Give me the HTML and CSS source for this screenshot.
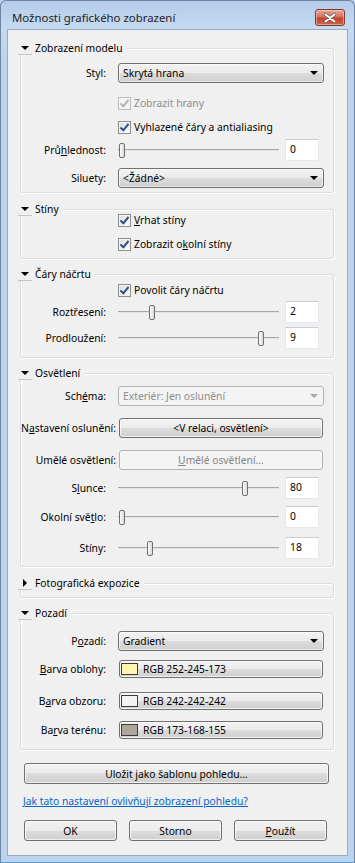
FILE: index.html
```html
<!DOCTYPE html>
<html lang="cs">
<head>
    <meta charset="UTF-8">
    <meta name="viewport" content="width=device-width, initial-scale=1.0">
    <title>Možnosti grafického zobrazení</title>
    <link rel="stylesheet" href="styles.css">
</head>
<body>

<div class="window">
    <div class="titlebar">
        <span class="title">Možnosti grafického zobrazení</span>
        <button class="close-btn" type="button">
            <svg width="12" height="10" viewBox="0 0 12 10"><path d="M1.5 1.5 L10.5 8.5 M10.5 1.5 L1.5 8.5" stroke="#5a5a5a" stroke-width="3.2" stroke-linecap="round"/><path d="M1.5 1.5 L10.5 8.5 M10.5 1.5 L1.5 8.5" stroke="#fff" stroke-width="2" stroke-linecap="round"/></svg>
        </button>
    </div>

    <div class="client">
        <!-- Zobrazení modelu -->
        <div class="group">
            <div class="group-head"><span class="twisty"></span>Zobrazení modelu</div>
            <div class="row sp14"><span class="label">Styl:</span><div class="combo">Skrytá hrana<span class="arrow"></span></div></div>
            <div class="row row-check sp12"><span class="check disabled"></span><span class="muted">Zobrazit hrany</span></div>
            <div class="row row-check sp8"><span class="check"></span>Vyhlazené čáry a antialiasing</div>
            <div class="row sp4"><span class="label">Prů<u>h</u>lednost:</span><div class="slider"><span class="thumb" style="margin-left: 1px"></span></div><div class="field">0</div></div>
            <div class="row sp7"><span class="label">Siluety:</span><div class="combo">&lt;Žádné&gt;<span class="arrow"></span></div></div>
            <div class="pad4"></div>
        </div>

        <!-- Stíny -->
        <div class="group group-loose">
            <div class="group-head"><span class="twisty"></span>Stíny</div>
            <div class="row row-check sp2"><span class="check"></span><span><u>V</u>rhat stíny</span></div>
            <div class="row row-check sp8"><span class="check"></span><span>Zobrazit o<u>k</u>olní stíny</span></div>
            <div class="pad6"></div>
        </div>

        <!-- Čáry náčrtu -->
        <div class="group">
            <div class="group-head"><span class="twisty"></span>Čáry náčrtu</div>
            <div class="row row-check sp7"><span class="check"></span>Povolit čáry náčrtu</div>
            <div class="row sp3"><span class="label">Roztřesení:</span><div class="slider"><span class="thumb" style="margin-left: 31px"></span></div><div class="field">2</div></div>
            <div class="row sp4"><span class="label">Prodloužení:</span><div class="slider"><span class="thumb" style="margin-left: 140px"></span></div><div class="field">9</div></div>
            <div class="pad8"></div>
        </div>

        <!-- Osvětlení -->
        <div class="group">
            <div class="group-head"><span class="twisty"></span>Osvětlení</div>
            <div class="row sp12"><span class="label">Sch<u>é</u>ma:</span><div class="combo disabled">Exteriér: Jen oslunění<span class="arrow"></span></div></div>
            <div class="row sp12"><span class="label label-wide">N<u>a</u>stavení oslunění:</span><button class="btn btn-wide" type="button">&lt;V relaci, osvětlení&gt;</button></div>
            <div class="row sp12"><span class="label label-wide">Umělé osvětlení:</span><button class="btn btn-wide" type="button" disabled><span><u>U</u>mělé osvětlení...</span></button></div>
            <div class="row sp7"><span class="label">S<u>l</u>unce:</span><div class="slider"><span class="thumb" style="margin-left: 124px"></span></div><div class="field">80</div></div>
            <div class="row sp7"><span class="label">Okolní svě<u>t</u>lo:</span><div class="slider"><span class="thumb" style="margin-left: 1px"></span></div><div class="field">0</div></div>
            <div class="row sp9"><span class="label">Stíny:</span><div class="slider"><span class="thumb" style="margin-left: 29px"></span></div><div class="field">18</div></div>
            <div class="pad7"></div>
        </div>

        <!-- Fotografická expozice (sbaleno) -->
        <div class="group group-loose group-collapsed">
            <div class="group-head"><span class="twisty closed"></span>Fotografická expozice</div>
        </div>

        <!-- Pozadí -->
        <div class="group">
            <div class="group-head"><span class="twisty"></span>Pozadí</div>
            <div class="row sp17"><span class="label">P<u>o</u>zadí:</span><div class="combo">Gradient<span class="arrow"></span></div></div>
            <div class="row sp9"><span class="label"><u>B</u>arva oblohy:</span><button class="btn btn-color" type="button"><span class="swatch" style="background: rgb(252, 245, 173)"></span>RGB 252-245-173</button></div>
            <div class="row sp14"><span class="label">B<u>a</u>rva obzoru:</span><button class="btn btn-color" type="button"><span class="swatch" style="background: rgb(242, 242, 242)"></span>RGB 242-242-242</button></div>
            <div class="row sp11"><span class="label">Ba<u>r</u>va terénu:</span><button class="btn btn-color" type="button"><span class="swatch" style="background: rgb(173, 168, 155)"></span>RGB 173-168-155</button></div>
            <div class="pad10"></div>
        </div>

        <button class="btn btn-save" type="button">Uložit jako šablonu pohledu...</button>
        <a class="help-link" href="#">Jak tato nastavení ovlivňují zobrazení pohledu?</a>

        <div class="actions">
            <button class="btn" type="button">OK</button>
            <button class="btn" type="button">Storno</button>
            <button class="btn" type="button"><span><u>P</u>oužít</span></button>
        </div>
    </div>
</div>

</body>
</html>
```

FILE: styles.css
```css
html, body {
    margin: 0;
}
body {
    background: #bcd3ee;
    font-family: "Noto Sans", "Open Sans", sans-serif;
    font-size: 10.3px;
    color: #000;
}
.window {
    width: 355px;
    height: 863px;
    box-sizing: border-box;
    border: 1px solid #6e86a3;
    border-bottom-color: #5a9ad9;
    border-radius: 6px 6px 0 0;
    background: linear-gradient(#b4cce9, #c6daf1 28px, #bcd3ee 60px);
    padding: 0 6px 6px;
    display: flex;
    flex-direction: column;
}
.titlebar {
    height: 28px;
    box-sizing: border-box;
    padding: 5px 3px 0 5px;
    display: flex;
    align-items: center;
    justify-content: space-between;
}
.title {
    font-size: 11.4px;
    color: #1e1e1e;
}
.close-btn {
    width: 30px;
    height: 17px;
    padding: 0;
    border: 1px solid #7a3a31;
    border-radius: 3px;
    background: linear-gradient(#e7a898, #d6715e 45%, #c2452e 55%, #d0634c);
    box-shadow: inset 0 0 0 1px rgba(255, 220, 210, 0.5);
    display: flex;
    align-items: center;
    justify-content: center;
}
.client {
    flex: 1;
    background: #f0f0f0;
    border: 1px solid #95abc6;
    display: flex;
    flex-direction: column;
}

/* skupiny */
.group {
    margin: 18px 13px 0 12px;
    border: 1px solid #d5dfe5;
    border-radius: 3px;
    box-shadow: inset 1px 1px #fff, 1px 1px #fff;
}
.group + .group {
    margin-top: 15px;
}
.group + .group-loose {
    margin-top: 16px;
}
.group-collapsed {
    padding-bottom: 13px;
}
.group-head {
    display: flex;
    align-items: center;
    width: fit-content;
    height: 14px;
    margin: -8px 0 -6px -3px;
    padding-right: 4px;
    background: #f0f0f0;
}
.twisty {
    width: 14px;
    height: 13px;
    border-bottom: 1px solid #c4c4c4;
    margin-right: 3px;
    display: flex;
    align-items: center;
    justify-content: center;
}
.twisty::before {
    content: "";
    border-left: 4px solid transparent;
    border-right: 4px solid transparent;
    border-top: 4px solid #000;
}
.twisty.closed::before {
    border-top: 4px solid transparent;
    border-bottom: 4px solid transparent;
    border-left: 4px solid #000;
    border-right: none;
}

/* řádky */
.row {
    display: flex;
    align-items: center;
    padding-right: 8px;
}
.row-check {
    height: 16px;
    padding-left: 97px;
}
.sp2 { margin-top: 2px; }
.sp3 { margin-top: 3px; }
.sp4 { margin-top: 4px; }
.sp7 { margin-top: 7px; }
.sp8 { margin-top: 8px; }
.sp9 { margin-top: 9px; }
.sp11 { margin-top: 11px; }
.sp12 { margin-top: 12px; }
.sp14 { margin-top: 14px; }
.sp17 { margin-top: 17px; }
.pad4 { height: 4px; }
.pad6 { height: 6px; }
.pad7 { height: 7px; }
.pad8 { height: 8px; }
.pad10 { height: 10px; }

.label {
    flex: 0 0 85px;
    min-width: 0;
    margin-right: 12px;
    text-align: right;
    white-space: nowrap;
}
.label-wide {
    flex-basis: 95px;
    margin-right: 2px;
}
.muted {
    color: #8d8d8d;
}

/* rozbalovací seznam */
.combo {
    width: 206px;
    height: 20px;
    box-sizing: border-box;
    border: 1px solid #707070;
    border-radius: 3px;
    background: linear-gradient(#f2f2f2, #ebebeb 50%, #dddddd 50%, #cfcfcf);
    box-shadow: inset 0 0 0 1px rgba(255, 255, 255, 0.6);
    padding: 0 5px 0 4px;
    display: flex;
    align-items: center;
    justify-content: space-between;
}
.arrow {
    border-left: 4px solid transparent;
    border-right: 4px solid transparent;
    border-top: 4px solid #000;
}
.combo.disabled {
    border-color: #adb2b5;
    background: #f4f4f4;
    box-shadow: none;
    color: #8d8d8d;
}
.combo.disabled .arrow {
    border-top-color: #a6a6a6;
}

/* zaškrtávátko */
.check {
    width: 13px;
    height: 13px;
    box-sizing: border-box;
    border: 1px solid #8e8f8f;
    background: linear-gradient(135deg, #dcdcdc, #fdfdfd);
    box-shadow: inset 0 0 0 1px #f4f4f4;
    margin-right: 3px;
    position: relative;
}
.check::after {
    content: "";
    position: absolute;
    left: 3px;
    top: 0;
    width: 3px;
    height: 7px;
    border-right: 2px solid #35508d;
    border-bottom: 2px solid #35508d;
    transform: rotate(40deg);
}
.check.disabled {
    border-color: #bcbcbc;
    background: #f4f4f4;
}
.check.disabled::after {
    border-color: #b3b3b3;
}

/* posuvník */
.slider {
    width: 161px;
    height: 22px;
    margin-right: 6px;
    display: flex;
    align-items: center;
    background: linear-gradient(transparent 10px, #a7a7a7 10px, #a7a7a7 11px, #e4e4e4 11px, #e4e4e4 12px, transparent 12px);
}
.thumb {
    width: 6px;
    height: 15px;
    box-sizing: border-box;
    border: 1px solid #707070;
    border-radius: 2px;
    background: linear-gradient(90deg, #fbfbfb, #dadada);
}
.field {
    width: 34px;
    height: 22px;
    box-sizing: border-box;
    border: 1px solid #e3e9ef;
    border-top-color: #c9ced4;
    background: #fff;
    padding: 2px 0 0 4px;
    line-height: 15px;
}

/* tlačítka */
.btn {
    height: 21px;
    padding: 0;
    border: 1px solid #707070;
    border-radius: 3px;
    background: linear-gradient(#f2f2f2, #ebebeb 50%, #dddddd 50%, #cfcfcf);
    box-shadow: inset 0 0 0 1px rgba(255, 255, 255, 0.7);
    font: inherit;
    color: #000;
    display: flex;
    align-items: center;
    justify-content: center;
}
.btn:disabled {
    border-color: #adb2b5;
    background: #f4f4f4;
    box-shadow: none;
    color: #838383;
}
.btn-wide {
    width: 204px;
    height: 20px;
    margin-left: 1px;
}
.btn-color {
    width: 204px;
    height: 18px;
    margin-left: 1px;
    justify-content: flex-start;
}
.swatch {
    width: 17px;
    height: 12px;
    box-sizing: border-box;
    border: 1px solid #3c3c3c;
    margin: 0 5px 0 1px;
}
.btn-save {
    margin: 13px 18px 0 16px;
}
.help-link {
    margin: 10px 0 0 15px;
    line-height: 15px;
    color: #0066cc;
    width: fit-content;
}
.actions {
    display: flex;
    gap: 12px;
    margin: 11px 0 0 16px;
}
.actions .btn {
    width: 93px;
}
```
